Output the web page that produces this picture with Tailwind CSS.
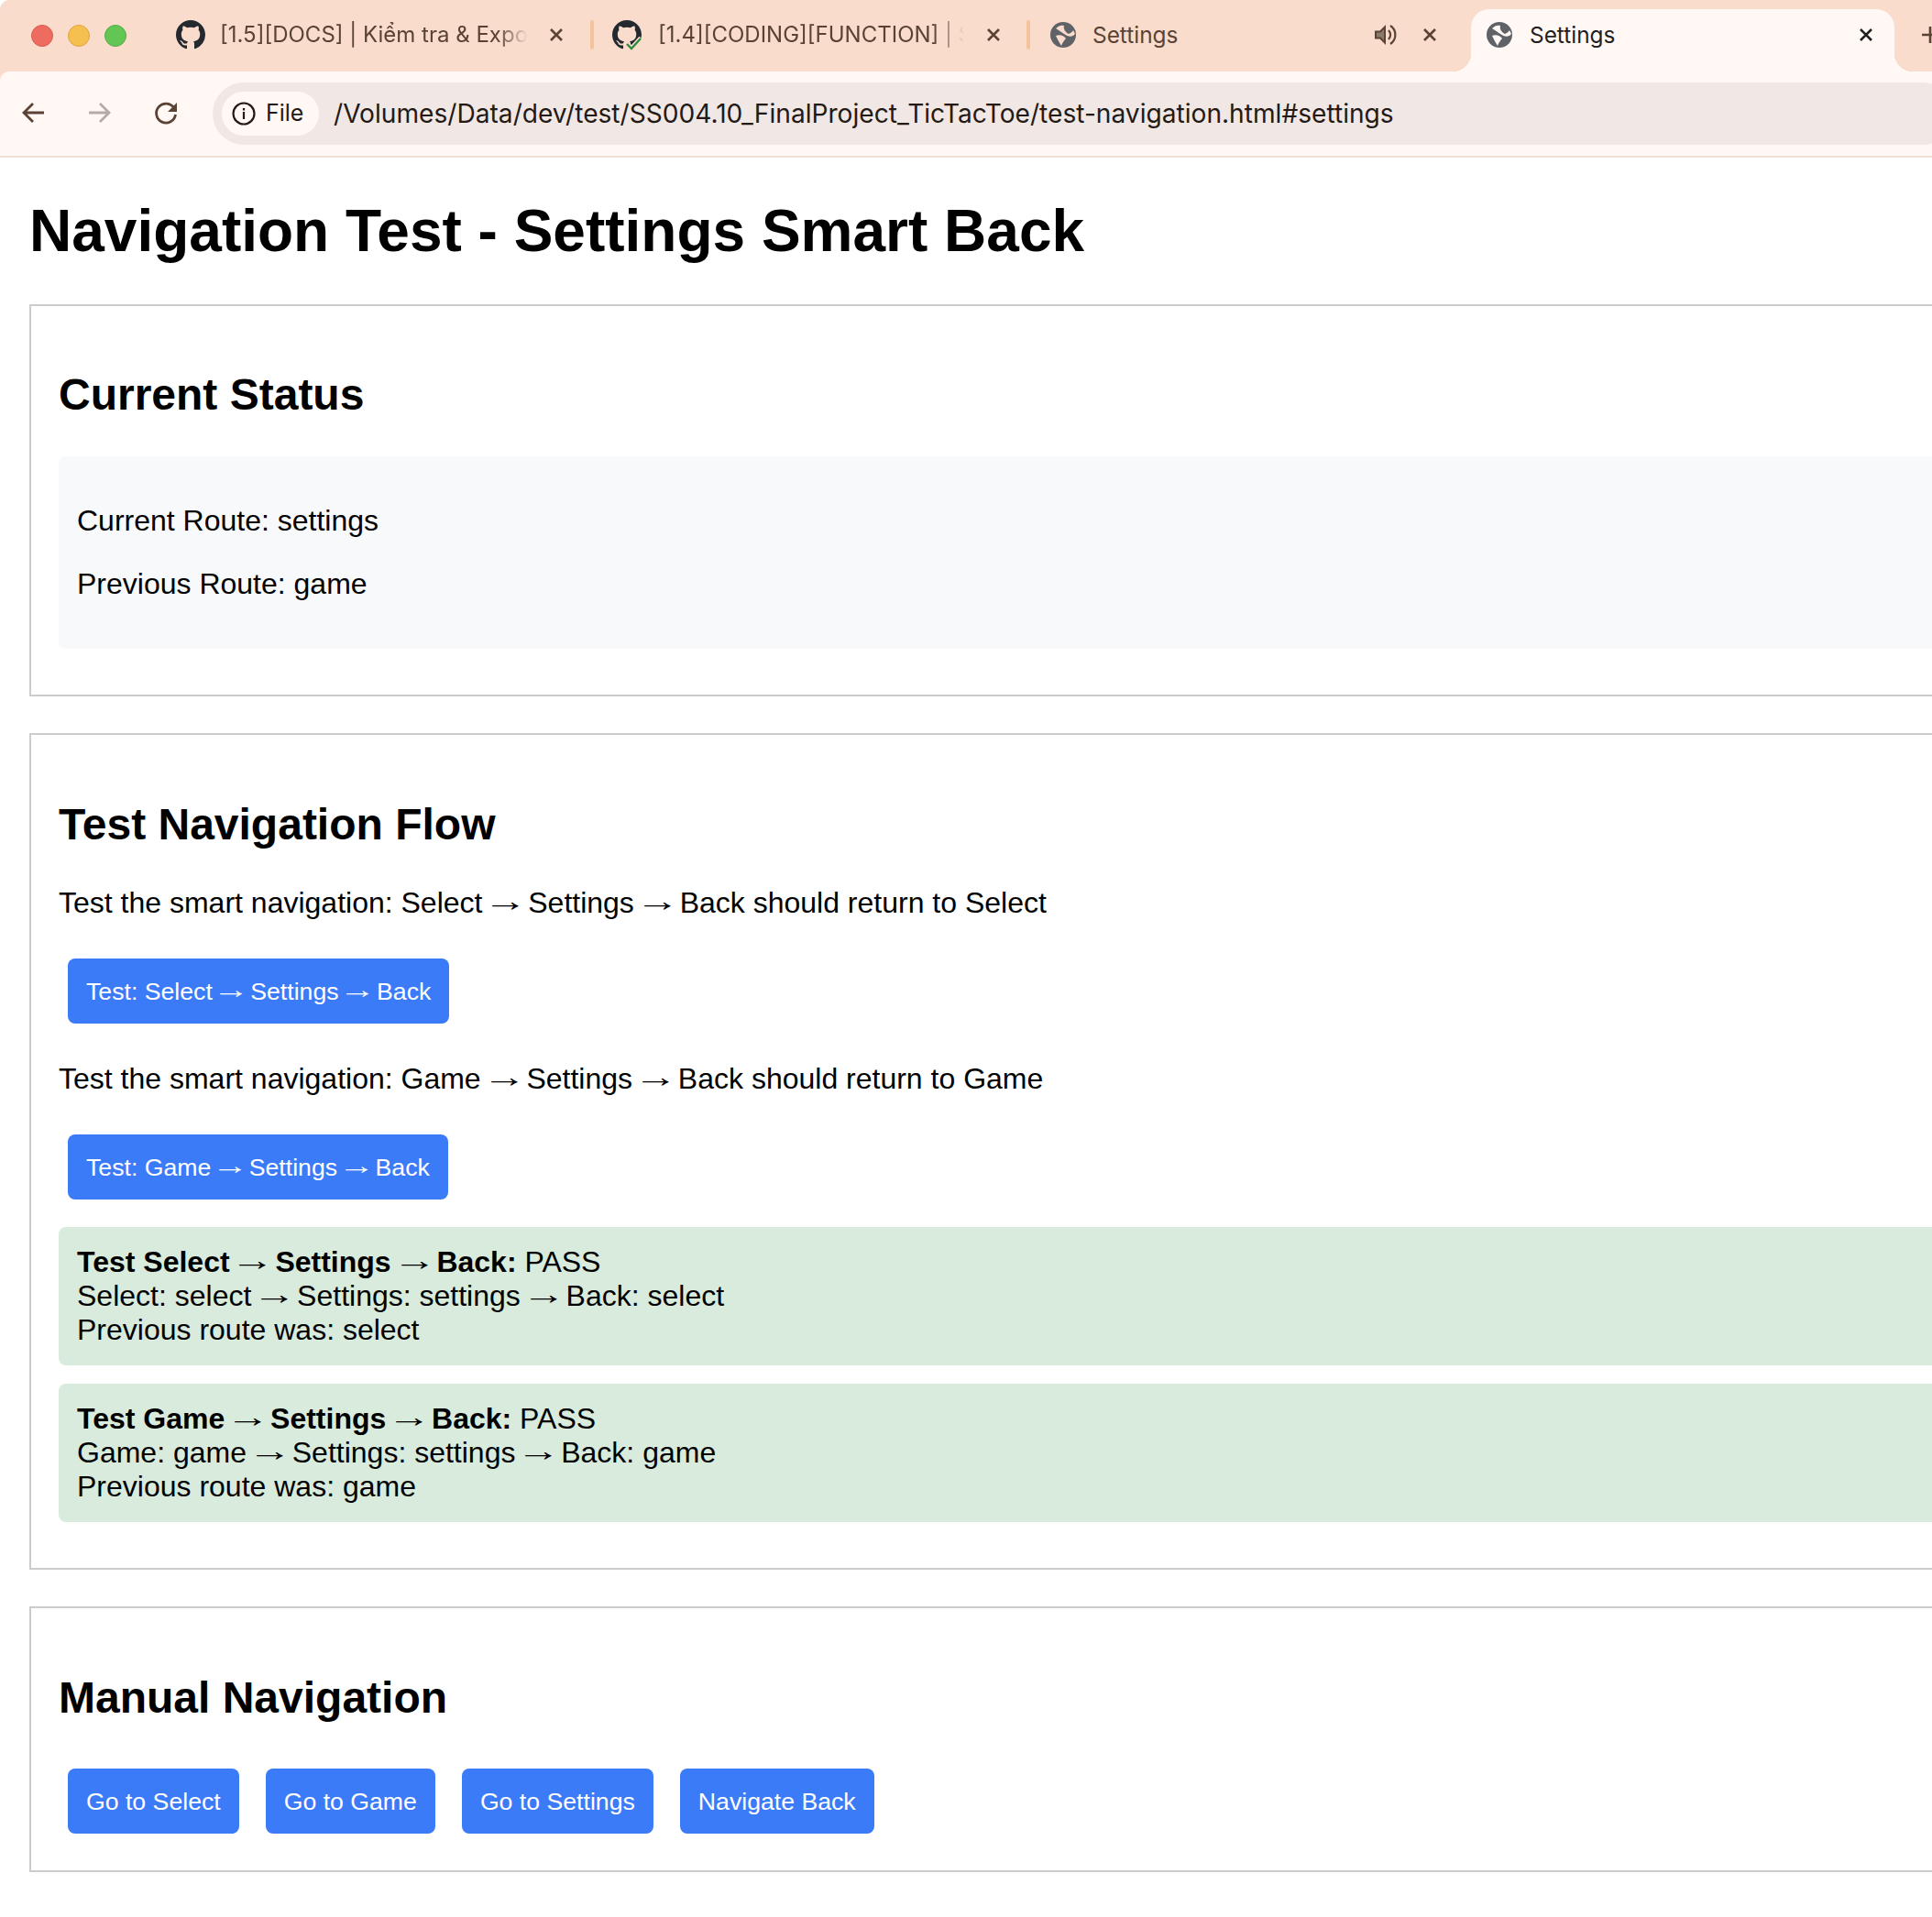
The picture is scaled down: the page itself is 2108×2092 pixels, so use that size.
<!DOCTYPE html>
<html><head><meta charset="utf-8"><script src="https://cdn.jsdelivr.net/npm/@tailwindcss/browser@4"></script></head>
<body class="bg-white overflow-hidden font-['Liberation_Sans',Arial,sans-serif] text-black w-[2108px] h-[2092px]">
<div class="flex flex-col bg-[#f9dccc] rounded-tl-[10px]">
<!-- tab strip -->
<div class="h-[78px] flex items-start relative font-['Inter',sans-serif] text-[24px] text-[#5a4334] overflow-hidden">
  <div class="w-[176px] shrink-0 h-[78px] flex items-center pl-[34px] gap-[16px]">
    <span class="w-[24px] h-[24px] rounded-full bg-[#ee6b5f] border border-[#d9594e]"></span><span class="w-[24px] h-[24px] rounded-full bg-[#f5c04f] border border-[#dea63c]"></span><span class="w-[24px] h-[24px] rounded-full bg-[#62c554] border border-[#52ad45]"></span>
  </div>
  <div class="w-[472px] h-[78px] shrink-0 flex items-center pl-[16px] gap-[16px] pb-[2px] relative">
    <svg class="shrink-0" width="32" height="32" viewBox="0 0 16 16" fill="#24292f"><path d="M8 0C3.58 0 0 3.58 0 8c0 3.54 2.29 6.53 5.47 7.59.4.07.55-.17.55-.38 0-.19-.01-.82-.01-1.49-2.01.37-2.53-.49-2.69-.94-.09-.23-.48-.94-.82-1.13-.28-.15-.68-.52-.01-.53.63-.01 1.08.58 1.23.82.72 1.21 1.87.87 2.33.66.07-.52.28-.87.51-1.07-1.78-.2-3.64-.89-3.64-3.95 0-.87.31-1.59.82-2.15-.08-.2-.36-1.02.08-2.12 0 0 .67-.21 2.2.82.64-.18 1.32-.27 2-.27s1.36.09 2 .27c1.53-1.04 2.2-.82 2.2-.82.44 1.1.16 1.92.08 2.12.51.56.82 1.27.82 2.15 0 3.07-1.87 3.75-3.65 3.95.29.25.54.73.54 1.48 0 1.07-.01 1.93-.01 2.2 0 .21.15.46.55.38A8.01 8.01 0 0 0 16 8c0-4.42-3.58-8-8-8z"/></svg>
    <span class="w-[336px] whitespace-nowrap [mask-image:linear-gradient(to_right,black_90%,transparent)]">[1.5][DOCS] | Kiểm tra &amp; Expo</span>
    <svg class="absolute left-[419px] top-[26px]" width="24" height="24" viewBox="0 0 24 24" stroke="#5a4334" stroke-width="2.6" fill="none"><path d="M6 6l12 12M18 6L6 18"/></svg>
    <span class="absolute right-0 top-[22px] w-[4px] h-[32px] bg-[#f4c29c] rounded"></span>
  </div>
  <div class="w-[476px] h-[78px] shrink-0 flex items-center pl-[20px] gap-[18px] pb-[2px] relative">
    <span class="relative w-[32px] h-[32px] shrink-0">
      <svg width="32" height="32" viewBox="0 0 16 16" fill="#24292f"><path d="M8 0C3.58 0 0 3.58 0 8c0 3.54 2.29 6.53 5.47 7.59.4.07.55-.17.55-.38 0-.19-.01-.82-.01-1.49-2.01.37-2.53-.49-2.69-.94-.09-.23-.48-.94-.82-1.13-.28-.15-.68-.52-.01-.53.63-.01 1.08.58 1.23.82.72 1.21 1.87.87 2.33.66.07-.52.28-.87.51-1.07-1.78-.2-3.64-.89-3.64-3.95 0-.87.31-1.59.82-2.15-.08-.2-.36-1.02.08-2.12 0 0 .67-.21 2.2.82.64-.18 1.32-.27 2-.27s1.36.09 2 .27c1.53-1.04 2.2-.82 2.2-.82.44 1.1.16 1.92.08 2.12.51.56.82 1.27.82 2.15 0 3.07-1.87 3.75-3.65 3.95.29.25.54.73.54 1.48 0 1.07-.01 1.93-.01 2.2 0 .21.15.46.55.38A8.01 8.01 0 0 0 16 8c0-4.42-3.58-8-8-8z"/></svg>
      <svg class="absolute left-[13px] top-[17px]" width="21" height="17" viewBox="0 0 21 17" fill="none"><path d="M2 9l6 6L19 3" stroke="#f9dccc" stroke-width="7"/><path d="M3 9l5 5L18 3" stroke="#2e8b3d" stroke-width="2.4"/></svg>
    </span>
    <span class="w-[334px] whitespace-nowrap [mask-image:linear-gradient(to_right,black_90%,transparent)]">[1.4][CODING][FUNCTION] | S</span>
    <svg class="absolute left-[424px] top-[26px]" width="24" height="24" viewBox="0 0 24 24" stroke="#5a4334" stroke-width="2.6" fill="none"><path d="M6 6l12 12M18 6L6 18"/></svg>
    <span class="absolute right-0 top-[22px] w-[4px] h-[32px] bg-[#f4c29c] rounded"></span>
  </div>
  <div class="w-[470px] h-[78px] shrink-0 flex items-center pl-[22px] gap-[18px] pb-[2px] relative">
    <svg width="28" height="28" viewBox="0 0 28 28"><circle cx="14" cy="14" r="14" fill="#5f6368"/><path d="M6 7C9 4 12 3 15 4C14 7 16 11 20 13C22 12 24 11 25 9L27 13C24 17 19 16 15 13C12 11 9 9 6 7ZM6 15C10 13 15 15 17 18C15 20 13 23 12 26C10 23 8 19 6 15Z" fill="#f9dccc"/></svg>
    <span class="text-[24.4px]">Settings</span>
    <svg class="absolute left-[376px] top-[27px]" width="24" height="22" viewBox="0 0 24 22" fill="none"><path d="M1 7.5h5l5-5v17l-5-5H1z" fill="#8a7a6e" stroke="#5a4334" stroke-width="2"/><path d="M15 6a7 7 0 0 1 0 10M17 1a12 12 0 0 1 0 20" stroke="#5a4334" stroke-width="2.2"/></svg>
    <svg class="absolute left-[424px] top-[26px]" width="24" height="24" viewBox="0 0 24 24" stroke="#5a4334" stroke-width="2.6" fill="none"><path d="M6 6l12 12M18 6L6 18"/></svg>
  </div>
  <span class="absolute left-[1585px] top-[58px] w-[20px] h-[20px] bg-[radial-gradient(circle_at_0_0,transparent_20px,#fff8f5_20.5px)]"></span>
  <span class="absolute left-[2067px] top-[58px] w-[20px] h-[20px] bg-[radial-gradient(circle_at_100%_0,transparent_20px,#fff8f5_20.5px)]"></span>
  <div class="absolute left-[1605px] top-[10px] w-[462px] h-[68px] bg-[#fff8f5] rounded-t-[20px] flex items-center pl-[17px] gap-[19px] text-[#1f1f1f] pb-[12px]">
    <svg width="28" height="28" viewBox="0 0 28 28"><circle cx="14" cy="14" r="14" fill="#5f6368"/><path d="M6 7C9 4 12 3 15 4C14 7 16 11 20 13C22 12 24 11 25 9L27 13C24 17 19 16 15 13C12 11 9 9 6 7ZM6 15C10 13 15 15 17 18C15 20 13 23 12 26C10 23 8 19 6 15Z" fill="#fff8f5"/></svg>
    <span class="text-[24.4px]">Settings</span>
    <svg class="absolute left-[419px] top-[16px]" width="24" height="24" viewBox="0 0 24 24" stroke="#1f1f1f" stroke-width="2.6" fill="none"><path d="M6 6l12 12M18 6L6 18"/></svg>
  </div>
  <svg class="absolute left-[2094px] top-[26px]" width="24" height="24" viewBox="0 0 24 24" stroke="#5a4334" stroke-width="2.6" fill="none"><path d="M12 3v18M3 12h18"/></svg>
</div>
<!-- toolbar -->
<div class="h-[94px] bg-[#fff8f5] rounded-tl-[10px] border-b-[2px] border-[#f3dfd5] flex items-center relative">
  <svg class="absolute left-[20px] top-[28px]" width="34" height="34" viewBox="0 0 34 34" fill="none" stroke="#5a4334" stroke-width="2.8"><path d="M28 17H7M16 7L6 17l10 10"/></svg>
  <svg class="absolute left-[91px] top-[28px]" width="34" height="34" viewBox="0 0 34 34" fill="none" stroke="#b3aba6" stroke-width="2.8"><path d="M6 17h21M18 7l10 10-10 10"/></svg>
  <svg class="absolute left-[164px] top-[28px]" width="34" height="34" viewBox="0 0 34 34" fill="none"><path d="M26 12A10.5 10.5 0 1 0 27.5 19" stroke="#5a4334" stroke-width="2.8"/><path d="M29 6v10H19z" fill="#5a4334"/></svg>
  <div class="absolute left-[232px] top-[12px] w-[1900px] h-[68px] rounded-full bg-[#f1e8e5] flex items-center pl-[10px] font-['Inter',sans-serif] text-[#241a15]">
    <div class="w-[106px] h-[48px] rounded-full bg-[#fff8f5] flex items-center pl-[11px] gap-[11px] text-[25px]">
      <svg width="26" height="26" viewBox="0 0 26 26" fill="none" stroke="#241a15" stroke-width="2.2"><circle cx="13" cy="13" r="11.5"/><path d="M13 11v8M13 7v2.5"/></svg>
      <span>File</span>
    </div>
    <span class="ml-[16px] text-[28.13px]">/Volumes/Data/dev/test/SS004.10_FinalProject_TicTacToe/test-navigation.html#settings</span>
  </div>
</div>
<!-- page -->
<div class="bg-white px-[32px] pt-[43px] h-[1920px]">
  <h1 class="text-[64px] font-bold leading-[74px] mb-[43px]">Navigation Test - Settings Smart Back</h1>
  <section class="w-[2200px] border-2 border-[#ccc] px-[30px] pt-[69px] pb-[50px] mb-[40px]">
    <h2 class="text-[48px] font-bold leading-[56px] mb-[39px]">Current Status</h2>
    <div class="bg-[#f8f9fa] rounded-[8px] px-[20px] pt-[52px] text-[32px] leading-[37px] h-[210px]">
      <p class="mb-[32px]">Current Route: settings</p>
      <p>Previous Route: game</p>
    </div>
  </section>
  <section class="w-[2200px] border-2 border-[#ccc] px-[30px] pt-[70px] pb-[50px] mb-[40px]">
    <h2 class="text-[48px] font-bold leading-[56px] mb-[39px]">Test Navigation Flow</h2>
    <p class="text-[32px] leading-[37px] mb-[42px]">Test the smart navigation: Select <span class="inline-block scale-x-[1.5] -translate-y-[2px]">→</span> Settings <span class="inline-block scale-x-[1.5] -translate-y-[2px]">→</span> Back should return to Select</p>
    <button class="block ml-[10px] h-[71px] px-[20px] rounded-[8px] bg-[#3b7bf8] text-white text-[26.67px] mb-[42px]">Test: Select <span class="inline-block scale-x-[1.5] -translate-y-[2px]">→</span> Settings <span class="inline-block scale-x-[1.5] -translate-y-[2px]">→</span> Back</button>
    <p class="text-[32px] leading-[37px] mb-[42px]">Test the smart navigation: Game <span class="inline-block scale-x-[1.5] -translate-y-[2px]">→</span> Settings <span class="inline-block scale-x-[1.5] -translate-y-[2px]">→</span> Back should return to Game</p>
    <button class="block ml-[10px] h-[71px] px-[20px] rounded-[8px] bg-[#3b7bf8] text-white text-[26.67px] mb-[30px]">Test: Game <span class="inline-block scale-x-[1.5] -translate-y-[2px]">→</span> Settings <span class="inline-block scale-x-[1.5] -translate-y-[2px]">→</span> Back</button>
    <div class="bg-[#d9ebdc] rounded-[8px] px-[20px] py-[20px] text-[32px] leading-[37px] mb-[20px]"><b>Test Select <span class="inline-block scale-x-[1.5] -translate-y-[2px] font-normal">→</span> Settings <span class="inline-block scale-x-[1.5] -translate-y-[2px] font-normal">→</span> Back:</b> PASS<br>Select: select <span class="inline-block scale-x-[1.5] -translate-y-[2px]">→</span> Settings: settings <span class="inline-block scale-x-[1.5] -translate-y-[2px]">→</span> Back: select<br>Previous route was: select</div>
    <div class="bg-[#d9ebdc] rounded-[8px] px-[20px] py-[20px] text-[32px] leading-[37px]"><b>Test Game <span class="inline-block scale-x-[1.5] -translate-y-[2px] font-normal">→</span> Settings <span class="inline-block scale-x-[1.5] -translate-y-[2px] font-normal">→</span> Back:</b> PASS<br>Game: game <span class="inline-block scale-x-[1.5] -translate-y-[2px]">→</span> Settings: settings <span class="inline-block scale-x-[1.5] -translate-y-[2px]">→</span> Back: game<br>Previous route was: game</div>
  </section>
  <section class="w-[2200px] border-2 border-[#ccc] px-[30px] pt-[70px] pb-[40px]">
    <h2 class="text-[48px] font-bold leading-[56px] mb-[49px]">Manual Navigation</h2>
    <div class="flex gap-[29px] ml-[10px]">
      <button class="h-[71px] px-[20px] rounded-[8px] bg-[#3b7bf8] text-white text-[26.67px]">Go to Select</button>
      <button class="h-[71px] px-[20px] rounded-[8px] bg-[#3b7bf8] text-white text-[26.67px]">Go to Game</button>
      <button class="h-[71px] px-[20px] rounded-[8px] bg-[#3b7bf8] text-white text-[26.67px]">Go to Settings</button>
      <button class="h-[71px] px-[20px] rounded-[8px] bg-[#3b7bf8] text-white text-[26.67px]">Navigate Back</button>
    </div>
  </section>
</div>
</div>
</body></html>
